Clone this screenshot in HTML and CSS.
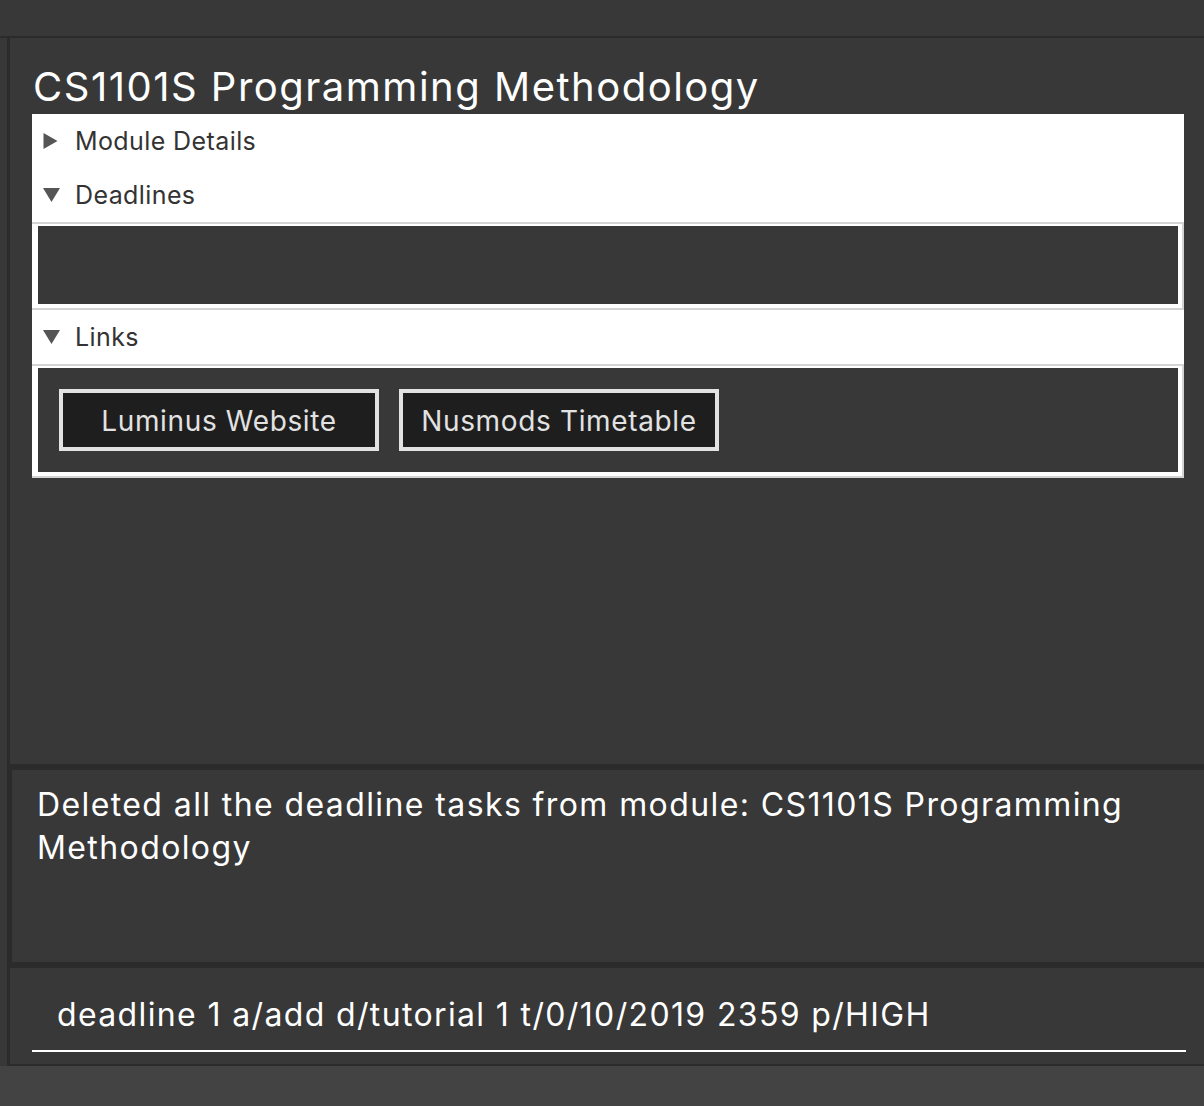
FILE: index.html
```html
<!DOCTYPE html>
<html>
<head>
<meta charset="utf-8">
<link rel="stylesheet" href="styles.css">
</head>
<body>
<div class="app">
  <div class="topbar"></div>
  <div class="workspace">
    <section class="module-panel">
      <h1 class="module-title">CS1101S Programming Methodology</h1>
      <div class="accordion">
        <div class="pane-header">
          <svg class="arrow" width="17" height="16" viewBox="0 0 17 16"><polygon points="0.5,0 14.5,8 0.5,16" /></svg>
          <span>Module Details</span>
        </div>
        <div class="pane-header">
          <svg class="arrow" width="17" height="16" viewBox="0 0 17 16"><polygon points="0,1 17,1 8.5,15" /></svg>
          <span>Deadlines</span>
        </div>
        <div class="pane-content">
          <div class="pane-inner deadlines-body"></div>
        </div>
        <div class="pane-header">
          <svg class="arrow" width="17" height="16" viewBox="0 0 17 16"><polygon points="0,1 17,1 8.5,15" /></svg>
          <span>Links</span>
        </div>
        <div class="pane-content">
          <div class="pane-inner links-body">
            <button class="link-btn">Luminus Website</button>
            <button class="link-btn">Nusmods Timetable</button>
          </div>
        </div>
      </div>
    </section>
    <section class="result-panel">
      <p class="result-text">Deleted all the deadline tasks from module: CS1101S Programming Methodology</p>
    </section>
    <section class="command-panel">
      <div class="command-field">deadline 1 a/add d/tutorial 1 t/0/10/2019 2359 p/HIGH</div>
    </section>
  </div>
  <div class="statusbar"></div>
</div>
</body>
</html>
```
FILE: styles.css
```css
* { box-sizing: border-box; }
html, body { margin: 0; padding: 0; }
body {
  background: #383838;
  font-family: "Inter", "Noto Sans", sans-serif;
  width: 1204px;
  height: 1106px;
  overflow: hidden;
}
.app {
  display: flex;
  flex-direction: column;
  height: 1106px;
}
.topbar {
  height: 38px;
  background: #383838;
  border-bottom: 2px solid #2b2b2b;
  flex: none;
}
.workspace {
  margin-left: 7px;
  padding-left: 3px;
  background: #2b2b2b;
  display: flex;
  flex-direction: column;
  gap: 6px;
  border-bottom: 2px solid #2b2b2b;
}
.module-panel {
  background: #383838;
  height: 726px;
  padding: 25px 20px 0 22px;
}
.module-title {
  margin: 0 0 3px 1px;
  font-weight: 400;
  font-size: 40px;
  line-height: 48px;
  letter-spacing: 1.5px;
  color: #ffffff;
}
.accordion {
  background: #ffffff;
}
.pane-header {
  height: 54px;
  display: flex;
  align-items: center;
  padding-left: 11px;
  gap: 15px;
  font-size: 25px;
  letter-spacing: 0.4px;
  color: #333333;
}
.pane-header .arrow {
  fill: #555555;
  flex: none;
}
.pane-content {
  background: #d4d4d4;
  padding: 2px 2px 2px 0;
}
.pane-inner {
  background: #383838;
  border-style: solid;
  border-color: #ffffff;
  border-width: 2px 4px 4px 6px;
}
.deadlines-body { height: 84px; }
.links-body {
  height: 110px;
  display: flex;
  gap: 20px;
  padding: 21px 0 0 21px;
}
.link-btn {
  width: 320px;
  height: 62px;
  background: #1e1e1e;
  border: 4px solid #e2e2e2;
  color: #e2e2e2;
  font-family: "Inter", "Noto Sans", sans-serif;
  font-size: 28px;
  letter-spacing: 0.65px;
  padding: 2px 0 0 0;
}
.result-panel {
  background: #383838;
  margin-left: 2px;
  height: 192px;
  padding: 13px 25px 0 25px;
}
.result-text {
  margin: 0;
  color: #ffffff;
  font-size: 32px;
  line-height: 43px;
  letter-spacing: 1.4px;
}
.command-panel {
  background: #383838;
  height: 96px;
  padding: 0 18px 0 22px;
}
.command-field {
  margin-top: 24px;
  height: 60px;
  border-bottom: 2px solid #ffffff;
  color: #ffffff;
  font-size: 32px;
  line-height: 46px;
  letter-spacing: 1.36px;
  padding-left: 25px;
}
.statusbar {
  flex: 1;
  background: #434343;
}
```
